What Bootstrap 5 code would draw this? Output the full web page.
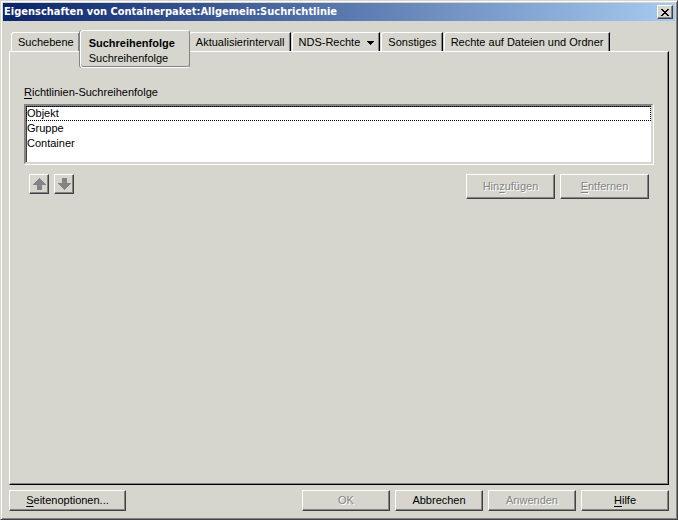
<!DOCTYPE html>
<html lang="de">
<head>
<meta charset="utf-8">
<meta name="viewport" content="width=device-width, initial-scale=1">
<title>Eigenschaften von Containerpaket:Allgemein:Suchrichtlinie</title>
<link href="https://cdn.jsdelivr.net/npm/bootstrap@5.3.0/dist/css/bootstrap.min.css" rel="stylesheet">
<style>
:root { --face: #d6d6ce; --shade: #848484; --dark: #424142; }
body { background: var(--face); color: #000; font-family: "Liberation Sans", Arial, sans-serif; font-size: 11px; line-height: 15px; }
button, select { font: inherit; color: inherit; border-radius: 0; }
u { text-underline-offset: 2px; }
.dialog-window { border: 1px solid; border-color: var(--face) var(--dark) var(--dark) var(--face); box-shadow: inset 1px 1px #fff, inset -1px -1px var(--shade); padding: 2px; }
.title-bar { height: 18px; background: linear-gradient(90deg, #0a246a, #a6caf0); color: #fff; padding: 0 2px 0 1px; }
.title-bar h1 { font: bold 11px/18px "DejaVu Sans Condensed", "DejaVu Sans", sans-serif; }
.raised { background: var(--face); border: 1px solid; border-color: #fff var(--dark) var(--dark) #fff; box-shadow: inset -1px -1px var(--shade); padding: 0; }
.close-btn { width: 16px; height: 14px; }
.dialog-body { padding: 9px 6px 0 6px; }
.tab-strip { padding-left: 2px; height: 21px; }
.tab-item { height: 19px; margin: 2px 1px 0 0; padding: 0 5px 0 6px; line-height: 17px; background: var(--face); border: 1px solid #fff; border-right-color: #000; border-bottom: 0; border-top-left-radius: 3px; box-shadow: inset -1px 0 var(--shade); white-space: nowrap; }
.tab-current { height: 38px; margin: 0 -1px; padding: 3px 14px 0 8px; line-height: 15px; text-align: left; border: 1px solid #fff; border-right-color: var(--shade); border-radius: 3px; background: var(--face); box-shadow: inset 0 -1px var(--shade), -1px 0 var(--shade); z-index: 1; }
.tab-panel { background: var(--face); border: 1px solid; border-color: #fff #000 #000 #fff; box-shadow: inset -1px -1px var(--shade); padding: 33px 15px 15px 14px; }
.order-list { height: 60px; overflow: hidden; padding: 0; background: #fff; border: 2px solid; border-color: var(--shade) var(--face) var(--face) var(--shade); box-shadow: 1px 1px #fff, inset 1px 1px var(--dark); outline: 0; }
.order-list option { min-height: 15px; padding: 0; line-height: 13px; border: 1px solid transparent; }
.order-list option:first-child { border: 1px dotted #000; }
.list-tools { padding: 10px 4px 0 5px; }
.btn-run { gap: 5px; }
.arrow-btn { width: 20px; height: 20px; }
.action-btn { width: 89px; height: 25px; }
.foot-btn { width: 88px; height: 21px; }
.page-btn { width: 117px; }
button:disabled { color: var(--shade); text-shadow: 1px 1px #fff; }
.foot-row { padding: 5px 0 6px; }
</style>
<script src="https://cdn.jsdelivr.net/npm/bootstrap@5.3.0/dist/js/bootstrap.bundle.min.js"></script>
</head>
<body>
<div class="dialog-window min-vh-100 d-flex flex-column">
  <header class="title-bar d-flex align-items-center justify-content-between">
    <h1 class="m-0 text-nowrap">Eigenschaften von Containerpaket:Allgemein:Suchrichtlinie</h1>
    <button type="button" class="raised close-btn d-flex align-items-center justify-content-center text-black" aria-label="Schließen">
      <svg width="8" height="7" viewBox="0 0 8 7" shape-rendering="crispEdges" aria-hidden="true"><path d="M0 0h2v1h1v1h2V1h1V0h2v1H7v1H6v1H5v1h1v1h1v1h1v1H6V6H5V5H3v1H2v1H0V6h1V5h1V4h1V3H2V2H1V1H0z"/></svg>
    </button>
  </header>
  <main class="dialog-body d-flex flex-column flex-grow-1">
    <nav class="tab-strip d-flex align-items-start" role="tablist" aria-label="Seiten">
      <button type="button" role="tab" class="tab-item">Suchebene</button>
      <button type="button" role="tab" aria-selected="true" class="tab-current position-relative"><b class="d-block">Suchreihenfolge</b><span class="d-block">Suchreihenfolge</span></button>
      <button type="button" role="tab" class="tab-item">Aktualisierintervall</button>
      <button type="button" role="tab" class="tab-item">NDS-Rechte <svg class="ms-1" width="7" height="4" viewBox="0 0 7 4" shape-rendering="crispEdges" aria-hidden="true"><path d="M0 0h7v1H6v1H5v1H4v1H3V3H2V2H1V1H0z"/></svg></button>
      <button type="button" role="tab" class="tab-item">Sonstiges</button>
      <button type="button" role="tab" class="tab-item">Rechte auf Dateien und Ordner</button>
    </nav>
    <section class="tab-panel flex-grow-1" role="tabpanel">
      <label for="order" class="d-block mb-1"><u>R</u>ichtlinien-Suchreihenfolge</label>
      <select id="order" class="order-list d-block w-100" size="4">
        <option>Objekt</option>
        <option>Gruppe</option>
        <option>Container</option>
      </select>
      <div class="list-tools d-flex justify-content-between">
        <div class="btn-run d-flex">
          <button type="button" class="raised arrow-btn" disabled aria-label="Nach oben"><svg class="d-block mx-auto" width="15" height="13" viewBox="0 0 15 13" shape-rendering="crispEdges" aria-hidden="true"><path fill="#848484" d="M7 0h1v1h1v1h1v1h1v1h1v1h1v1h1v1h-4v5H5V7H1V6h1V5h1V4h1V3h1V2h1V1h1z"/></svg></button>
          <button type="button" class="raised arrow-btn" disabled aria-label="Nach unten"><svg class="d-block mx-auto" width="15" height="13" viewBox="0 0 15 13" shape-rendering="crispEdges" aria-hidden="true"><path fill="#848484" d="M5 0h5v5h4v1h-1v1h-1v1h-1v1h-1v1H9v1H8v1H7v-1H6v-1H5V9H4V8H3V7H2V6H1V5h4z"/></svg></button>
        </div>
        <div class="btn-run d-flex">
          <button type="button" class="raised action-btn" disabled>Hin<u>z</u>ufügen</button>
          <button type="button" class="raised action-btn" disabled><u>E</u>ntfernen</button>
        </div>
      </div>
    </section>
    <footer class="foot-row d-flex justify-content-between">
      <button type="button" class="raised foot-btn page-btn"><u>S</u>eitenoptionen...</button>
      <div class="btn-run d-flex">
        <button type="button" class="raised foot-btn" disabled>OK</button>
        <button type="button" class="raised foot-btn">Abbrechen</button>
        <button type="button" class="raised foot-btn" disabled>Anwenden</button>
        <button type="button" class="raised foot-btn"><u>H</u>ilfe</button>
      </div>
    </footer>
  </main>
</div>
</body>
</html>
